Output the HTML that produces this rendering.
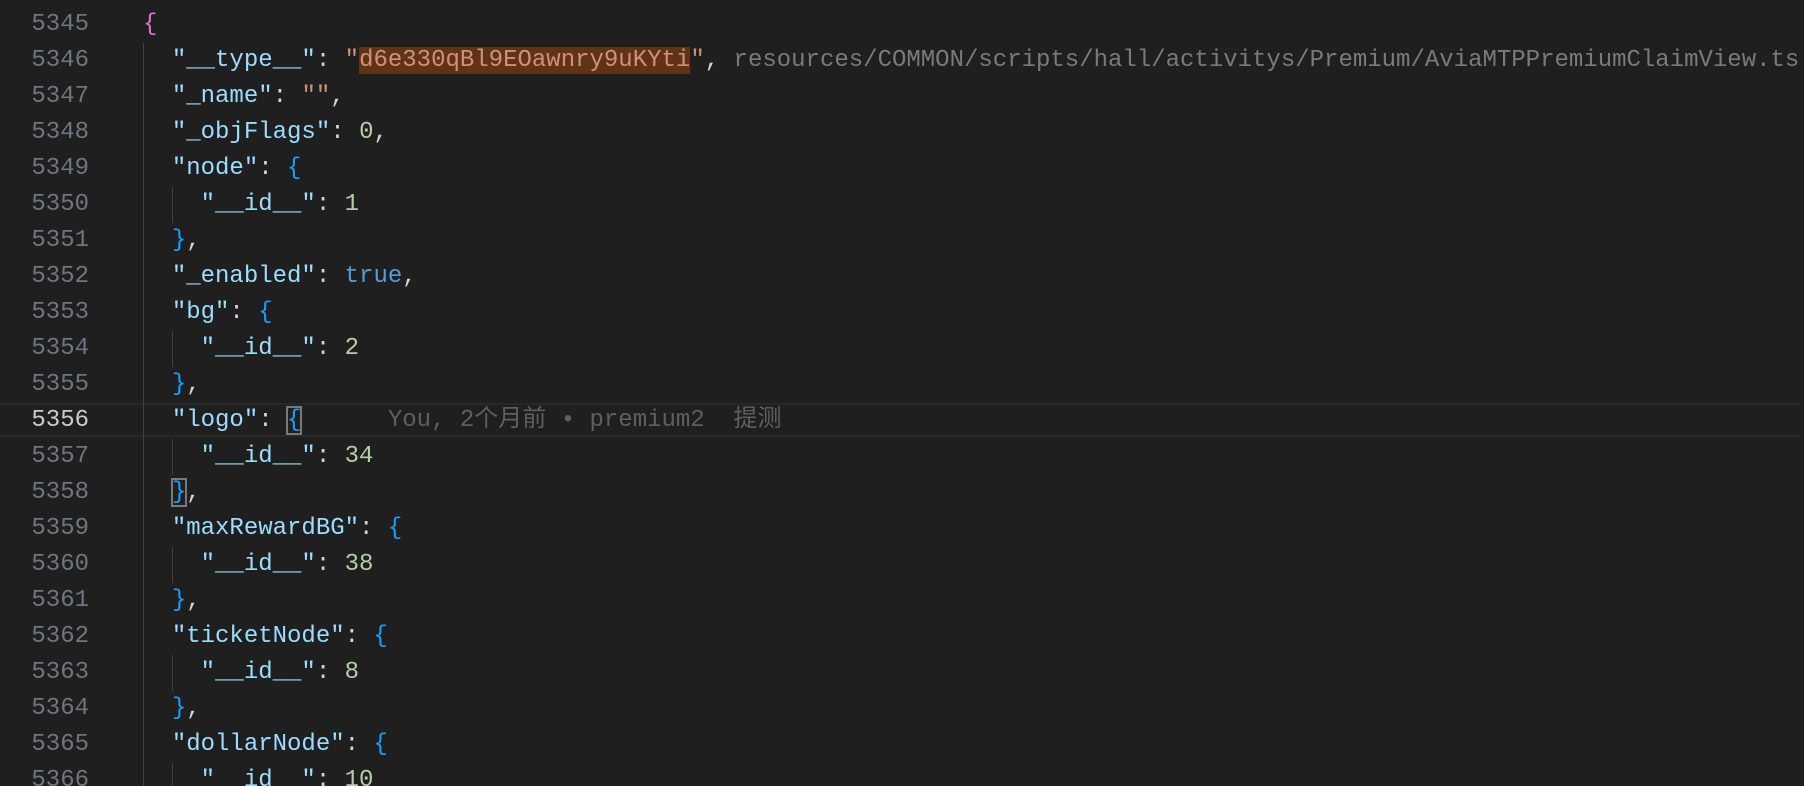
<!DOCTYPE html>
<html><head><meta charset="utf-8"><style>
html,body{margin:0;padding:0;background:#1f1f1f;width:1804px;height:786px;overflow:hidden}
body{position:relative;font-family:"Liberation Mono","Noto Sans CJK SC",monospace;font-size:24px}
.l{position:absolute;left:0;height:36px;line-height:36px;white-space:pre;width:1804px}
.n{position:absolute;left:0;width:89px;text-align:right;color:#6e7681}
.n.a{color:#cccccc}
.c{position:absolute;left:143px;color:#d4d4d4}
.k{color:#9cdcfe}.s{color:#ce9178}.num{color:#b5cea8}.t{color:#569cd6}
.p{color:#da70d6}.b{color:#179fff}.g{color:#7a7a7a}
.hl{background:#613315}
.cur{position:absolute;left:0;top:403px;width:1804px;height:34px;border-top:2px solid #282828;border-bottom:2px solid #282828;box-sizing:border-box;width:1800px}
.guide{position:absolute;width:1px;background:#404040}
.box{outline:2px solid #7a7a7a;outline-offset:-1px}
</style></head><body>
<div class="cur"></div>
<div class="guide" style="left:143px;top:43px;height:743px"></div>
<div class="guide" style="left:172px;top:187px;height:36px"></div>
<div class="guide" style="left:172px;top:331px;height:36px"></div>
<div class="guide" style="left:172px;top:439px;height:36px"></div>
<div class="guide" style="left:172px;top:547px;height:36px"></div>
<div class="guide" style="left:172px;top:655px;height:36px"></div>
<div class="guide" style="left:172px;top:763px;height:36px"></div>

<div class="l" style="top:-29px"><span class="c"><span class="b">}</span>,</span></div>
<div class="l" style="top:7px"><span class="n">5345</span><span class="c"><span class="p">{</span></span></div>
<div class="l" style="top:43px"><span class="n">5346</span><span class="c">  <span class="k">"__type__"</span>: <span class="s">"<span class="hl">d6e330qBl9EOawnry9uKYti</span>"</span>, <span class="g">resources/COMMON/scripts/hall/activitys/Premium/AviaMTPPremiumClaimView.ts</span></span></div>
<div class="l" style="top:79px"><span class="n">5347</span><span class="c">  <span class="k">"_name"</span>: <span class="s">""</span>,</span></div>
<div class="l" style="top:115px"><span class="n">5348</span><span class="c">  <span class="k">"_objFlags"</span>: <span class="num">0</span>,</span></div>
<div class="l" style="top:151px"><span class="n">5349</span><span class="c">  <span class="k">"node"</span>: <span class="b">{</span></span></div>
<div class="l" style="top:187px"><span class="n">5350</span><span class="c">    <span class="k">"__id__"</span>: <span class="num">1</span></span></div>
<div class="l" style="top:223px"><span class="n">5351</span><span class="c">  <span class="b">}</span>,</span></div>
<div class="l" style="top:259px"><span class="n">5352</span><span class="c">  <span class="k">"_enabled"</span>: <span class="t">true</span>,</span></div>
<div class="l" style="top:295px"><span class="n">5353</span><span class="c">  <span class="k">"bg"</span>: <span class="b">{</span></span></div>
<div class="l" style="top:331px"><span class="n">5354</span><span class="c">    <span class="k">"__id__"</span>: <span class="num">2</span></span></div>
<div class="l" style="top:367px"><span class="n">5355</span><span class="c">  <span class="b">}</span>,</span></div>
<div class="l" style="top:403px"><span class="n a">5356</span><span class="c">  <span class="k">"logo"</span>: <span class="b box">{</span>      <span class="g" style="color:#5f5f5f">You, 2个月前 • premium2  提测</span></span></div>
<div class="l" style="top:439px"><span class="n">5357</span><span class="c">    <span class="k">"__id__"</span>: <span class="num">34</span></span></div>
<div class="l" style="top:475px"><span class="n">5358</span><span class="c">  <span class="b box">}</span>,</span></div>
<div class="l" style="top:511px"><span class="n">5359</span><span class="c">  <span class="k">"maxRewardBG"</span>: <span class="b">{</span></span></div>
<div class="l" style="top:547px"><span class="n">5360</span><span class="c">    <span class="k">"__id__"</span>: <span class="num">38</span></span></div>
<div class="l" style="top:583px"><span class="n">5361</span><span class="c">  <span class="b">}</span>,</span></div>
<div class="l" style="top:619px"><span class="n">5362</span><span class="c">  <span class="k">"ticketNode"</span>: <span class="b">{</span></span></div>
<div class="l" style="top:655px"><span class="n">5363</span><span class="c">    <span class="k">"__id__"</span>: <span class="num">8</span></span></div>
<div class="l" style="top:691px"><span class="n">5364</span><span class="c">  <span class="b">}</span>,</span></div>
<div class="l" style="top:727px"><span class="n">5365</span><span class="c">  <span class="k">"dollarNode"</span>: <span class="b">{</span></span></div>
<div class="l" style="top:763px"><span class="n">5366</span><span class="c">    <span class="k">"__id__"</span>: <span class="num">10</span></span></div>
</body></html>
